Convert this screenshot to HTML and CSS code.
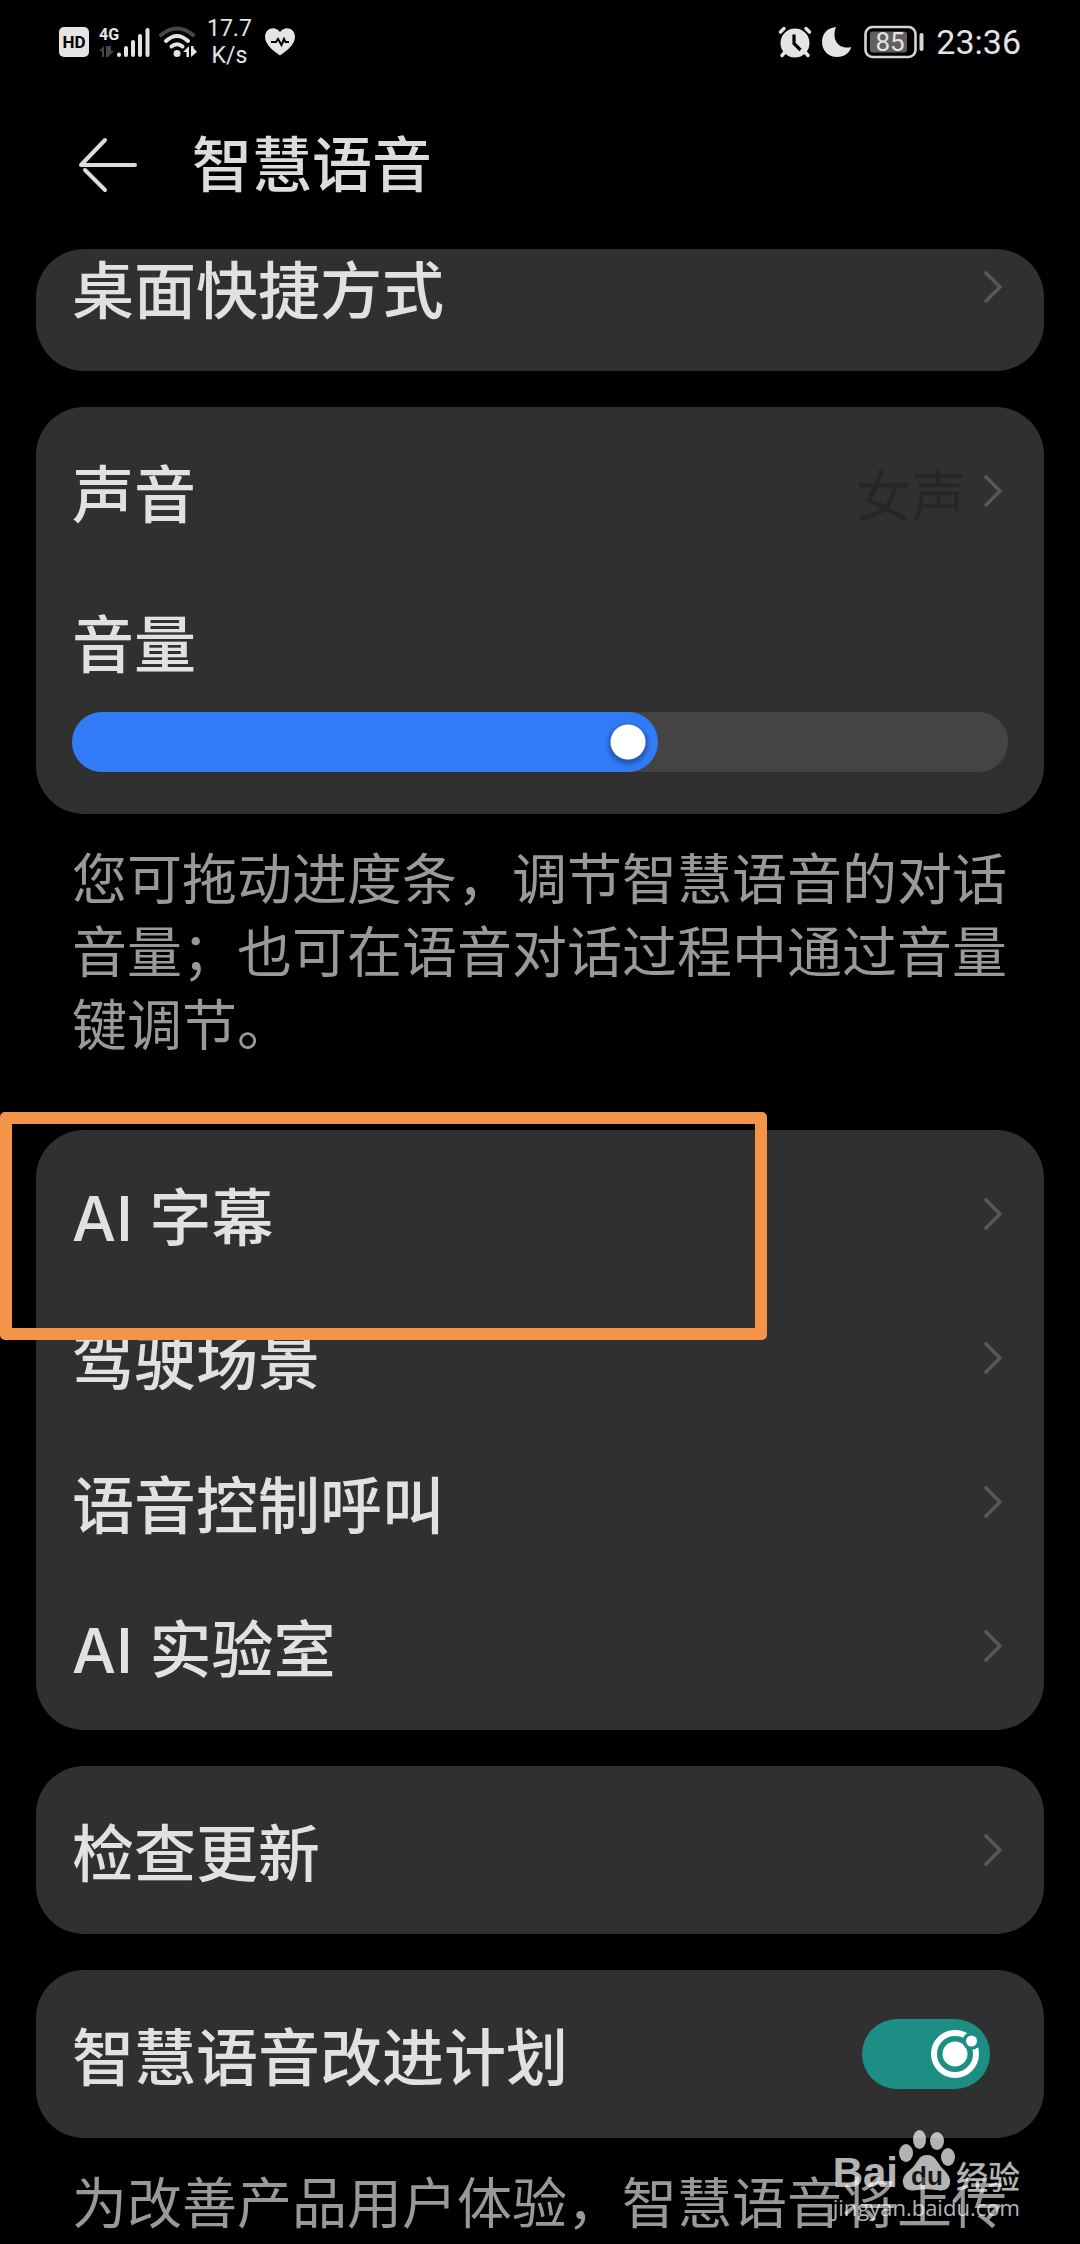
FILE: index.html
```html
<!DOCTYPE html>
<html lang="zh-CN">
<head>
<meta charset="utf-8">
<meta name="viewport" content="width=device-width, initial-scale=1">
<title>智慧语音</title>
<link rel="stylesheet" href="styles.css">
</head>
<body>
<svg class="defs" aria-hidden="true">
  <symbol id="chevron" viewBox="0 0 18 32"><path d="M2 2 16 16 2 30" fill="none" stroke="currentColor" stroke-width="3.6" stroke-linecap="round" stroke-linejoin="round"/></symbol>
</svg>

<div class="status">
  <div class="status-group">
    <span class="hd">HD</span>
    <svg class="signal" width="51" height="32" viewBox="0 0 51 32" aria-hidden="true">
      <text class="net" x="0" y="14">4G</text>
      <path d="M5 20v11H3v-6H0zM9 20v11h-2V20zM9 31l6-6h-3v-5h-3z" fill="#454545"/>
      <g stroke="#e4e4e4" stroke-width="4" stroke-linecap="round">
        <path d="M20 28.500v.5M27 22v7M34 16v13M41 10v19M48.500 4v25"/>
      </g>
    </svg>
    <svg class="wifi" width="38" height="32" viewBox="0 0 38 32" fill="none" aria-hidden="true">
      <path d="M2 9Q18 -4 34 9" stroke="#484848" stroke-width="4" stroke-linecap="round"/>
      <path d="M7 15Q18 5 29 15M12.500 20.500Q18 16 23.500 20.500" stroke="#e4e4e4" stroke-width="4" stroke-linecap="round"/>
      <circle cx="18" cy="27.500" r="3.500" fill="#e4e4e4"/>
      <path d="M30 20v11h-2.500v-5H24zM32 31V20h2.500v2l3.500 4z" fill="#e4e4e4"/>
    </svg>
    <div class="speed">17.7<br>K/s</div>
    <svg class="heart" width="32" height="28" viewBox="0 0 32 28" aria-hidden="true">
      <path d="M16 27.500C11 24 1 17 1 9 1 0 11-2.500 16 4 21-2.500 31 0 31 9c0 8-10 15-15 18.500z" fill="#e4e4e4"/>
      <path d="M7 14h5l2-3 3.500 6 2.500-6 1.500 3H25" fill="none" stroke="#000" stroke-width="2"/>
    </svg>
  </div>
  <div class="status-group">
    <svg width="34" height="32" viewBox="0 0 34 32" aria-hidden="true">
      <g stroke="#e4e4e4" stroke-width="3.500" stroke-linecap="round"><path d="M2.500 6 6 2.500M31.500 6 28 2.500M4 29.500 8 25M30 29.500 26 25"/></g>
      <circle cx="17" cy="17" r="14.500" fill="#e4e4e4"/>
      <path d="M16 8.500v9l6.500 6.500" fill="none" stroke="#000" stroke-width="3.200"/>
    </svg>
    <svg class="moon" width="30" height="32" viewBox="0 0 30 32" aria-hidden="true"><path d="M14 1C4 2 0 9 0 16c0 9 7 15 15 15 7 0 13-4 14-10C17 24 9 14 14 1z" fill="#e4e4e4"/></svg>
    <svg class="battery" width="60" height="34" viewBox="0 0 60 34" aria-hidden="true">
      <rect x="1.500" y="2" width="50" height="30" rx="7" fill="none" stroke="#d4d4d4" stroke-width="2.600"/>
      <rect x="6" y="6.500" width="37" height="21" rx="3" fill="#606060"/>
      <rect x="55.500" y="8" width="4" height="18" rx="2" fill="#d4d4d4"/>
      <text class="charge" x="26" y="26" text-anchor="middle">85</text>
    </svg>
    <time class="clock">23:36</time>
  </div>
</div>

<header class="header">
  <button class="back" type="button" aria-label="返回">
    <svg width="60" height="56" viewBox="0 0 60 56"><path d="M57 28H3L27 3M7 33 27 53" fill="none" stroke="#dcdcdc" stroke-width="4" stroke-linecap="round" stroke-linejoin="round"/></svg>
  </button>
  <h1 class="title">智慧语音</h1>
</header>

<main class="list">
  <section class="card card-scrolled">
    <a class="row" href="#shortcut"><span class="label">桌面快捷方式</span><svg class="chevron"><use href="#chevron"/></svg></a>
  </section>

  <section class="card card-sound">
    <a class="row" href="#voice"><span class="label">声音</span><span class="value">女声</span><svg class="chevron"><use href="#chevron"/></svg></a>
    <div class="volume">
      <label class="volume-label" for="volume">音量</label>
      <input class="slider" id="volume" type="range" min="0" max="100" value="60">
    </div>
  </section>
  <p class="note">您可拖动进度条，调节智慧语音的对话音量；也可在语音对话过程中通过音量键调节。</p>

  <section class="card card-features">
    <a class="row" href="#subtitle"><span class="label">AI 字幕</span><svg class="chevron"><use href="#chevron"/></svg></a>
    <a class="row" href="#driving"><span class="label">驾驶场景</span><svg class="chevron"><use href="#chevron"/></svg></a>
    <a class="row" href="#call"><span class="label">语音控制呼叫</span><svg class="chevron"><use href="#chevron"/></svg></a>
    <a class="row" href="#lab"><span class="label">AI 实验室</span><svg class="chevron"><use href="#chevron"/></svg></a>
    <div class="highlight"></div>
  </section>

  <section class="card">
    <a class="row" href="#update"><span class="label">检查更新</span><svg class="chevron"><use href="#chevron"/></svg></a>
  </section>

  <section class="card">
    <div class="row row-switch">
      <label class="label" for="improve">智慧语音改进计划</label>
      <span class="switch">
        <input class="switch-input" id="improve" type="checkbox" role="switch" checked>
        <svg class="knob" width="52" height="52" viewBox="0 0 52 52" aria-hidden="true">
          <circle cx="26" cy="26" r="21" fill="none" stroke="#fff" stroke-width="6"/>
          <circle cx="26" cy="26" r="12.500" fill="#fff"/>
          <circle cx="42.500" cy="13" r="9" fill="#1c8e84"/>
          <circle cx="42.500" cy="13" r="5.500" fill="#fff"/>
        </svg>
      </span>
    </div>
  </section>
  <div class="footer">
    <p class="note note-last">为改善产品用户体验，智慧语音将上传</p>
    <div class="watermark">
      <div class="brand">
        <span class="brand-bai">Bai</span>
        <svg width="56" height="62" viewBox="0 0 56 62">
          <g fill="#fff">
            <ellipse cx="7" cy="23" rx="7" ry="9"/><ellipse cx="20.500" cy="9.500" rx="6.500" ry="9.500"/>
            <ellipse cx="38" cy="11" rx="7" ry="9"/><ellipse cx="49" cy="27" rx="7" ry="9"/>
            <path d="M28 25c9 0 10 8 16 14 5 5 8 9 7 14-1 8-9 8-14 7-6-1-12-1-18 0C13 61 5 61 4 53c-1-6 3-10 8-14 7-6 7-14 16-14z"/>
          </g>
          <text class="du" x="28" y="55" text-anchor="middle">du</text>
        </svg>
        <span class="brand-cn">经验</span>
      </div>
      <div class="site">jingyan.baidu.com</div>
    </div>
  </div>
</main>
</body>
</html>
```
FILE: styles.css
```css
* { box-sizing: border-box; }

body {
  margin: 0;
  background: #000;
  color: #e1e1e1;
  font-family: Inter, "Noto Sans CJK SC", sans-serif;
  overflow-x: hidden;
}

a { color: inherit; text-decoration: none; }

.defs { position: absolute; width: 0; height: 0; }

/* status bar */
.status {
  display: flex;
  justify-content: space-between;
  align-items: center;
  height: 84px;
  padding: 0 59px;
  color: #e4e4e4;
  font-family: Roboto, sans-serif;
}
.status-group { display: flex; align-items: center; }
.hd {
  width: 30px;
  border-radius: 5px;
  background: #e4e4e4;
  color: #000;
  font-size: 17px;
  font-weight: 700;
  line-height: 30px;
  text-align: center;
}
.signal { margin-left: 10px; overflow: visible; }
.net { fill: #e4e4e4; font: 700 16px Roboto, sans-serif; }
.wifi { margin-left: 9px; }
.speed {
  margin-left: 10px;
  font-size: 23px;
  line-height: 27px;
  text-align: center;
}
.heart { margin-left: 12px; }
.moon { margin-left: 10px; }
.battery { margin-left: 12px; }
.charge { fill: #e4e4e4; font: 400 26px Roboto, sans-serif; }
.clock { margin-left: 12px; font-size: 34px; line-height: 40px; }

/* page header */
.header {
  display: flex;
  align-items: center;
  gap: 54px;
  height: 165px;
  padding: 0 78px 4px;
}
.back { display: flex; padding: 0; border: 0; background: none; }
.title {
  margin: 0;
  color: #dcdcdc;
  font-size: 60px;
  font-weight: 500;
  line-height: 72px;
}

/* setting cards */
.list { padding: 0 36px; }
.card {
  margin-bottom: 36px;
  padding: 12px 0;
  border-radius: 48px;
  background: #303030;
}
.card-scrolled { padding-top: 0; overflow: hidden; }
.card-scrolled .row { margin-top: -34px; }
.card-sound { margin-bottom: 0; padding-bottom: 42px; }
.card-features { position: relative; }

.row {
  display: flex;
  align-items: center;
  min-height: 144px;
  padding: 0 42px 0 36px;
}
.row-switch { padding-right: 54px; }
.label, .value { padding-top: 10px; line-height: 72px; }
.label { flex: 1; font-size: 62px; font-weight: 500; }
.value { margin-right: 18px; color: #262626; font-size: 55px; }
.chevron { width: 18px; height: 32px; color: #575757; }

.volume { display: flex; flex-direction: column; gap: 30px; padding: 47px 36px 0; }
.volume-label { font-size: 62px; font-weight: 500; line-height: 72px; }

.slider {
  appearance: none;
  width: 100%;
  height: 60px;
  margin: 0;
  border-radius: 30px;
  background: linear-gradient(to right, #317bf7 calc(60% - 6px), #444 calc(60% - 6px));
}
.slider::-webkit-slider-thumb {
  appearance: none;
  width: 60px;
  height: 60px;
  border-radius: 50%;
  background:
    radial-gradient(circle at 50% 50%, #fff 17px, transparent 18px),
    radial-gradient(circle at 50% 54%, #2359b4 17px, #317bf7 23px);
}

.note {
  margin: 0;
  padding: 29px 36px 0;
  color: #999;
  font-size: 55px;
  line-height: 73px;
}
.card-sound + .note { margin-bottom: 68px; }

/* annotation box around the first feature */
.highlight {
  position: absolute;
  top: -18px;
  left: -36px;
  width: 767px;
  height: 228px;
  border: 12px solid #f39449;
  border-radius: 5px;
}

.switch { display: grid; align-items: center; justify-items: end; }
.switch > * { grid-area: 1 / 1; }
.switch-input {
  appearance: none;
  width: 128px;
  height: 70px;
  margin: 0;
  border-radius: 35px;
  background: #1c8e84;
}
.knob { margin-right: 9px; pointer-events: none; }

.footer { position: relative; margin-top: -36px; }
.note-last { white-space: nowrap; }
.watermark {
  position: absolute;
  top: -8px;
  right: 24px;
  color: #fff;
  opacity: .7;
}
.brand { display: flex; align-items: flex-end; gap: 1px; }
.brand-bai { font: 700 42px/38px "Liberation Sans", sans-serif; }
.brand-cn { font: 500 32px/34px "Noto Sans CJK SC", sans-serif; }
.du { fill: #222; font: 700 26px "Liberation Sans", sans-serif; }
.site { font: 500 22px/30px "Open Sans", sans-serif; }
```
